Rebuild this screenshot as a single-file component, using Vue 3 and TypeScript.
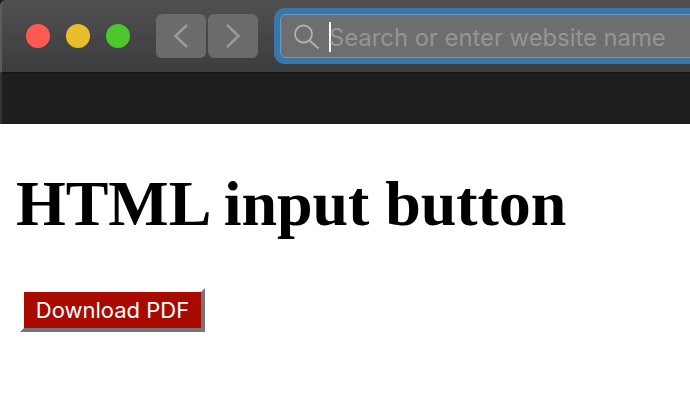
<template>
  <div class="page">
    <header class="chrome">
      <div class="toolbar">
        <div class="lights">
          <span v-for="c in lights" :key="c" class="light" :class="c"></span>
        </div>
        <div class="nav">
          <button class="nav-btn" aria-label="Back">
            <svg width="24" height="28" viewBox="0 0 24 28" fill="none">
              <path d="M18 3 L6.5 14 L18 25" stroke="#98999a" stroke-width="2.6" />
            </svg>
          </button>
          <button class="nav-btn" aria-label="Forward">
            <svg width="24" height="28" viewBox="0 0 24 28" fill="none">
              <path d="M6 3 L17.5 14 L6 25" stroke="#98999a" stroke-width="2.6" />
            </svg>
          </button>
        </div>
        <div class="search-ring">
          <div class="search">
            <svg class="glass" width="26" height="26" viewBox="0 0 26 26" fill="none">
              <circle cx="9.5" cy="10" r="8.5" stroke="#b0b0b0" stroke-width="1.8" />
              <path d="M15.5 16.5 L24.5 24.5" stroke="#b0b0b0" stroke-width="2" />
            </svg>
            <span class="caret"></span>
            <span class="placeholder">Search or enter website name</span>
          </div>
        </div>
      </div>
      <div class="tabstrip"></div>
    </header>
    <main class="content">
      <h1>HTML input button</h1>
      <button class="download">Download PDF</button>
    </main>
  </div>
</template>

<script setup lang="ts">
const lights: string[] = ['red', 'yellow', 'green']
</script>

<style>
html,
body {
  margin: 0;
  background: #fff;
}
</style>

<style scoped>
.page {
  width: 690px;
  height: 412px;
  overflow: hidden;
  background: #fff;
}
.chrome {
  background: #1e1e1e;
}
.toolbar {
  height: 73px;
  box-sizing: border-box;
  padding: 8px 0 8px 24px;
  display: flex;
  align-items: center;
  background: linear-gradient(#504f51, #3c3d3f);
  border-left: 2px solid #5c5c5c;
  border-bottom: 1px solid #161616;
  border-top-left-radius: 6px;
  overflow: hidden;
}
.lights {
  display: flex;
  gap: 16px;
}
.light {
  width: 24px;
  height: 24px;
  border-radius: 50%;
}
.red {
  background: #fe5a52;
}
.yellow {
  background: #e8bf2b;
}
.green {
  background: #50c62d;
}
.nav {
  display: flex;
  gap: 2px;
  margin-left: 26px;
}
.nav-btn {
  width: 50px;
  height: 44px;
  padding: 0;
  border: 0;
  border-radius: 6px;
  background: #6a6b6d;
  display: flex;
  align-items: center;
  justify-content: center;
}
.search-ring {
  margin-left: 16px;
  width: 440px;
  height: 56px;
  flex: none;
  box-sizing: border-box;
  padding: 6px;
  background: #3b76a8;
  border-radius: 11px;
}
.search {
  height: 44px;
  box-sizing: border-box;
  display: flex;
  align-items: center;
  padding-left: 13px;
  background: #6e6e6e;
  border: 1px solid #6b9cc4;
  border-radius: 6px;
}
.glass {
  flex: none;
  margin-top: 2px;
}
.caret {
  width: 2px;
  height: 30px;
  margin: 1px 0 0 9px;
  background: #fff;
  flex: none;
}
.placeholder {
  font-family: Inter, "Liberation Sans", sans-serif;
  font-size: 23.8px;
  margin: 3px 0 0 -2px;
  color: #959595;
  white-space: nowrap;
}
.tabstrip {
  height: 51px;
  background: #1e1e1e;
  border-left: 2px solid #333;
}
.content {
  padding: 0 16px;
}
h1 {
  margin: 43px 0 0;
  font-family: "Liberation Serif", serif;
  font-size: 64px;
  font-weight: 700;
  line-height: 74px;
  letter-spacing: -0.06px;
  color: #000;
}
.download {
  display: block;
  margin: 47px 0 0 4px;
  width: 185px;
  height: 44px;
  padding: 0;
  box-sizing: border-box;
  border-width: 4px;
  border-style: solid;
  border-color: transparent #767676 #767676 transparent;
  background: #a80a00;
  background-clip: padding-box;
  color: #fff;
  font-family: Inter, "Liberation Sans", sans-serif;
  font-size: 22px;
}
</style>
